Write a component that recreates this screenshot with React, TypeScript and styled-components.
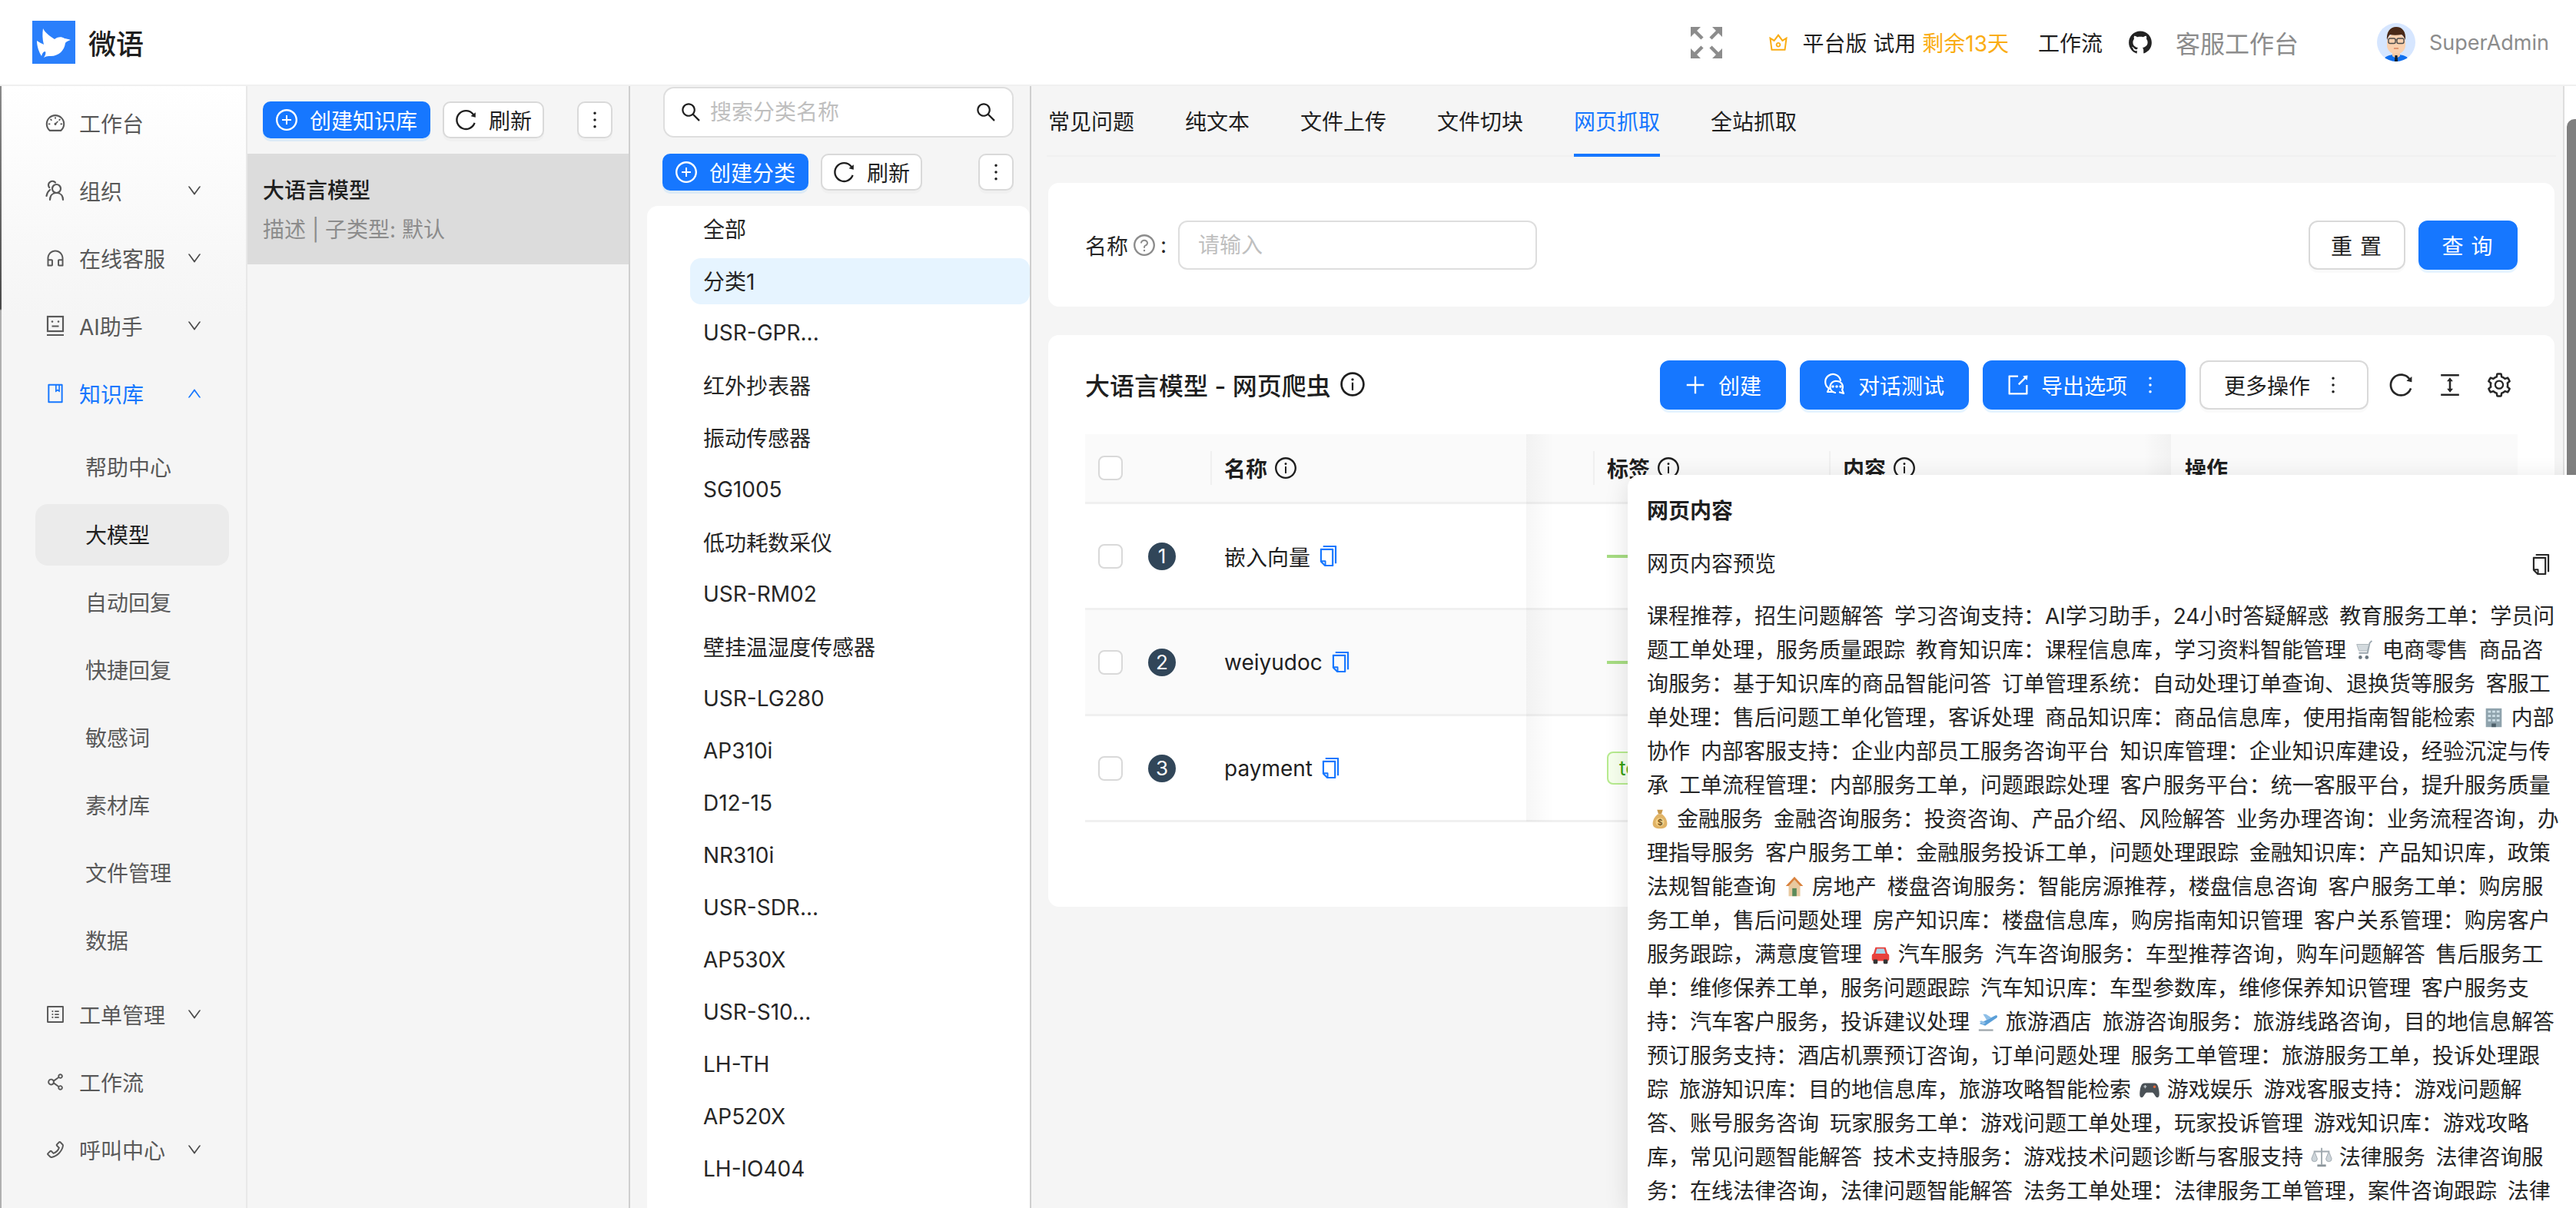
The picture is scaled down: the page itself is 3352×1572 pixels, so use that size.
import React from "react";
import styled, { createGlobalStyle } from "styled-components";
import {
  AiOutlineDashboard, AiOutlineCustomerService, AiOutlineBook, AiOutlineProfile, AiOutlineShareAlt,
  AiOutlinePhone, AiOutlineDown, AiOutlineUp, AiOutlinePlusCircle, AiOutlineReload, AiOutlineMore,
  AiOutlineSearch, AiOutlineInfoCircle, AiOutlineQuestionCircle, AiOutlinePlus, AiOutlineExport,
  AiOutlineColumnHeight, AiOutlineSetting, AiOutlineCrown, AiFillGithub, AiOutlineCopy,
} from "react-icons/ai";

const Global = createGlobalStyle`
  html, body { margin: 0; padding: 0; background: #f5f5f5; }
  * { box-sizing: border-box; }
  body { font-family: Inter, "Noto Sans CJK SC", sans-serif; font-size: 28px; color: #1f1f1f; }
`;

const Page = styled.div`width: 3352px; height: 1572px; overflow: hidden; display: flex; flex-direction: column; position: relative;`;
const Header = styled.header`height: 112px; flex: none; background: #fff; border-bottom: 2px solid #f0f0f0; display: flex; align-items: center; padding: 0 35px 0 42px;`;
const Brand = styled.div`display: flex; align-items: center; gap: 17px; font-size: 36px; font-weight: 500; color: #1f1f1f;`;
const HeaderRight = styled.div`margin-left: auto; display: flex; align-items: center;`;
const FullBtn = styled.span`display: flex; margin-right: 58px;`;
const PlanIcon = styled.span`display: flex; color: #faad14; margin-right: 16px; font-size: 30px;`;
const PlanText = styled.span`white-space: nowrap; margin-right: 38px;`;
const Warn = styled.span`color: #faad14; margin-left: 8px;`;
const HeaderLink = styled.span`white-space: nowrap; margin-right: 32px;`;
const GitIcon = styled.span`display: flex; font-size: 34px; margin-right: 29px; color: #222;`;
const Desk = styled.span`font-size: 32px; color: #8c8c8c; white-space: nowrap; margin-right: 102px;`;
const User = styled.div`display: flex; align-items: center; gap: 18px; color: #8c8c8c; font-size: 27px;`;

const Body = styled.div`flex: 1; min-height: 0; display: flex; position: relative; overflow: hidden;`;
const EdgeStrip = styled.div`width: 2px; flex: none; background: linear-gradient(#8a8a8a 0, #4a4a4a 290px, #b0b0b0 292px);`;
const Sidebar = styled.nav`width: 320px; flex: none; padding: 8px 22px 0 44px; background: linear-gradient(#ffffff, #f5f5f5 300px); border-right: 2px solid #e8e8e8; display: flex; flex-direction: column; gap: 8px;`;
const SubMenu = styled.div`display: flex; flex-direction: column; gap: 8px; margin: 8px 0;`;
const MenuRow = styled.div<{ $active?: boolean; $selected?: boolean; $sub?: boolean }>`
  height: 80px; flex: none; display: flex; align-items: center; gap: 17px; border-radius: 16px;
  padding: ${(p) => (p.$sub ? "0 0 2px 65px" : "0 34px 0 12px")};
  color: ${(p) => (p.$active ? "#1677ff" : p.$selected ? "#1f1f1f" : "#595959")};
  background: ${(p) => (p.$selected ? "#ebebeb" : "transparent")};
  white-space: nowrap;
`;
const MenuIcon = styled.span`display: flex; width: 28px; font-size: 30px; justify-content: center;`;
const Chevron = styled.span`margin-left: auto; display: flex; font-size: 22px; color: #4a4a4a; stroke: currentColor; stroke-width: 50;`;
const ChevronActive = styled(Chevron)`color: #1677ff;`;

const KbColumn = styled.section`width: 498px; flex: none; background: #f5f5f5; border-right: 2px solid #cfcfcf;`;
const BtnRow = styled.div`display: flex; align-items: center; gap: 16px;`;
const KbToolbar = styled(BtnRow)`height: 88px; padding: 0 21px 0 20px;`;
const SmallBtn = styled.button<{ $primary?: boolean }>`
  height: 48px; display: inline-flex; align-items: center; gap: 16px; border-radius: 10px;
  padding: 0 ${(p) => (p.$primary ? "15px" : "14px")};
  font: inherit; white-space: nowrap; cursor: pointer;
  background: ${(p) => (p.$primary ? "#1677ff" : "#fff")};
  color: ${(p) => (p.$primary ? "#fff" : "#1f1f1f")};
  border: 2px solid ${(p) => (p.$primary ? "#1677ff" : "#d9d9d9")};
  box-shadow: 0 4px 0 ${(p) => (p.$primary ? "rgba(5,145,255,.1)" : "rgba(0,0,0,.02)")};
`;
const MoreBtn = styled(SmallBtn)`margin-left: auto; width: 46px; padding: 0; justify-content: center;`;
const BtnIcon = styled.span`display: flex; font-size: 32px; margin: -2px;`;
const KbItem = styled.div`height: 144px; background: #dcdcdc; padding: 28px 20px; display: flex; flex-direction: column; gap: 12px;`;
const KbTitle = styled.div`font-weight: 500; line-height: 40px; color: #1f1f1f;`;
const KbDesc = styled.div`color: #8c8c8c; line-height: 38px;`;

const CatColumn = styled.section`width: 522px; flex: none; background: #f5f5f5; border-right: 2px solid #cfcfcf; padding-top: 1px; overflow: hidden;`;
const SearchBox = styled.div`margin: 0 21px 0 43px; height: 66px; border: 2px solid #dedede; border-radius: 14px; background: #fff; display: flex; align-items: center; padding: 0 20px; gap: 11px;`;
const SearchInput = styled.input`
  flex: 1; min-width: 0; border: 0; outline: 0; font: inherit; background: transparent; padding: 0; color: #1f1f1f;
  &::placeholder { color: #bfbfbf; }
`;
const SearchIcon = styled.span`display: flex; font-size: 30px; color: #1f1f1f; margin: -1px;`;
const CatToolbar = styled(BtnRow)`margin: 21px 21px 20px 42px;`;
const CatList = styled.ul`list-style: none; margin: 0 0 0 22px; padding: 0; background: #fff; border-radius: 14px 14px 0 0; height: 1400px;`;
const CatItem = styled.li<{ $selected?: boolean }>`
  height: 60px; margin: 0 0 8px 56px; padding: 0 0 2px 17px; display: flex; align-items: center; border-radius: 14px; color: #262626;
  background: ${(p) => (p.$selected ? "#e6f4ff" : "transparent")};
`;

const Main = styled.main`flex: 1; min-width: 0; background: #f5f5f5; padding: 0 11px 0 22px;`;
const Tabs = styled.div`height: 92px; margin: 0 -2px; border-bottom: 2px solid #f0f0f0; display: flex; gap: 66px; padding-left: 2px;`;
const Tab = styled.div<{ $active?: boolean }>`
  height: 92px; line-height: 94px; white-space: nowrap; position: relative;
  color: ${(p) => (p.$active ? "#1677ff" : "#1f1f1f")};
  border-bottom: 4px solid ${(p) => (p.$active ? "#1677ff" : "transparent")};
`;
const Card = styled.div`background: #fff; border-radius: 14px;`;
const FilterCard = styled(Card)`height: 161px; margin-top: 34px; padding: 0 48px; display: flex; align-items: center;`;
const Label = styled.label`display: flex; align-items: center; gap: 5px; white-space: nowrap; margin-right: 15px; color: #262626;`;
const HelpIcon = styled.span`display: flex; color: #8c8c8c; font-size: 32px;`;
const FilterInput = styled.input`
  width: 467px; height: 64px; border: 2px solid #dedede; border-radius: 12px; padding: 0 24px; font: inherit; outline: 0; background: #fff;
  &::placeholder { color: #bfbfbf; }
`;
const FilterActions = styled.div`margin-left: auto; display: flex; gap: 17px;`;
const BigBtn = styled.button<{ $primary?: boolean }>`
  height: 64px; display: inline-flex; align-items: center; gap: 16px; padding: 0 30px; border-radius: 12px; font: inherit; white-space: nowrap; cursor: pointer;
  background: ${(p) => (p.$primary ? "#1677ff" : "#fff")};
  color: ${(p) => (p.$primary ? "#fff" : "#1f1f1f")};
  border: 2px solid ${(p) => (p.$primary ? "#1677ff" : "#d9d9d9")};
  box-shadow: 0 4px 0 ${(p) => (p.$primary ? "rgba(5,145,255,.1)" : "rgba(0,0,0,.02)")};
`;
const SpacedBtn = styled(BigBtn)`letter-spacing: 10px; padding: 0 24px 0 32px; width: ${(p) => (p.$primary ? "129px" : "126px")}; justify-content: center;`;
const TableCard = styled(Card)`height: 744px; margin-top: 37px; padding: 33px 48px;`;
const TableHead = styled.div`height: 64px; display: flex; align-items: center; margin-bottom: 32px;`;
const TableTitle = styled.h2`margin: 0 0 2px; font-size: 32px; font-weight: 500; display: flex; align-items: center; gap: 10px; color: #1f1f1f;`;
const TitleIcon = styled.span`display: flex; font-size: 36px;`;
const TableActions = styled.div`margin-left: auto; display: flex; align-items: center; gap: 18px;`;
const ToolIcons = styled.div`display: flex; align-items: center; gap: 28px; font-size: 36px; margin-left: 6px; margin-right: 6px; color: #262626;`;
const ToolIcon = styled.span`display: flex;`;
const Table = styled.div`position: relative;`;
const Row = styled.div<{ $head?: boolean; $striped?: boolean }>`
  display: grid; grid-template-columns: 163px 411px 87px 307px 445px 451px;
  height: ${(p) => (p.$head ? "91px" : "138px")};
  background: ${(p) => (p.$head || p.$striped ? "#fafafa" : "#fff")};
  border-bottom: 3px solid #f0f0f0;
  font-weight: ${(p) => (p.$head ? 600 : 400)};
`;
const Cell = styled.div<{ $divider?: boolean }>`
  display: flex; align-items: center; padding-left: 18px; position: relative; gap: 8px; white-space: nowrap; overflow: hidden;
  ${(p) => p.$divider && `&::before { content: ""; position: absolute; left: 0; top: 22px; height: 44px; width: 2px; background: #f0f0f0; }`}
`;
const CheckCell = styled(Cell)`gap: 33px; padding-left: 17px;`;
const Check = styled.span`width: 32px; height: 32px; border: 2px solid #d9d9d9; border-radius: 8px; background: #fff; flex: none;`;
const Rank = styled.span`width: 36px; height: 36px; border-radius: 50%; background: #314659; color: #fff; font-size: 26px; display: flex; align-items: center; justify-content: center; flex: none;`;
const CopyBlue = styled.span`display: flex; color: #1677ff; font-size: 31px;`;
const HeadIcon = styled.span`display: flex; font-size: 32px; font-weight: 400;`;
const ActionHead = styled(Cell)`background: #fafafa;`;
const LeftFade = styled.div`position: absolute; left: 574px; top: 0; width: 36px; height: 504px; background: linear-gradient(to right, rgba(5,5,5,.035), transparent); pointer-events: none;`;
const RightFade = styled.div`position: absolute; left: 1377px; top: 0; width: 36px; height: 91px; background: linear-gradient(to left, rgba(5,5,5,.035), transparent); pointer-events: none;`;
const GreenBar = styled.span`width: 60px; height: 4px; background: #a6dc82; flex: none;`;
const GreenTag = styled.span`height: 43px; padding: 0 14px; display: inline-flex; align-items: center; border: 2px solid #b7eb8f; background: #f6ffed; color: #389e0d; border-radius: 8px; font-size: 26px;`;

const ScrollTrack = styled.div`width: 17px; flex: none; background: #fff; border-left: 2px solid #dedede; padding: 43px 0 0 3px;`;
const ScrollThumb = styled.div`width: 12px; height: 600px; background: #808080; border-radius: 10px 0 0 10px;`;

const Popup = styled.aside`
  position: absolute; left: 2118px; top: 506px; right: 0; bottom: 0; background: #fff; border-radius: 16px 0 0 0;
  box-shadow: 0 6px 32px rgba(0,0,0,.12); padding: 25px 18px 0 25px; overflow: hidden;
`;
const PopupTitle = styled.div`font-weight: 600; line-height: 44px;`;
const PreviewRow = styled.div`display: flex; align-items: center; justify-content: space-between; line-height: 44px; margin-top: 25px; padding-right: 12px; color: #262626;`;
const PopupCopy = styled.span`display: flex; font-size: 31px; color: #262626;`;
const Content = styled.div`margin-top: 24px; color: #262626;`;
const Line = styled.div`height: 44px; line-height: 44px; white-space: nowrap; word-spacing: 6px;`;
const EmojiBox = styled.svg<{ $lead?: boolean }>`
  width: 30px; height: 30px; vertical-align: -5px;
  margin: ${(p) => (p.$lead ? "0 -7px 0 2px" : "0 -6px 0 -5px")};
`;

const Logo = () => (
  <svg width="56" height="56" viewBox="0 0 56 56">
    <rect width="56" height="56" fill="#2a7ffb" />
    <path d="M14 10c3 6 9 10 15 14 3-3 9-4 13-1 2 0 5 1 8 2-3 1-6 2-7 4-1 9-8 17-19 17-3 0-6 0-9 2 2-3 3-6 2-8-3 0-4 3-5 6-3-5-6-12-6-20 3 2 7 4 9 5-2-7-2-14-1-21z" fill="#fff" />
  </svg>
);
const Expand = () => (
  <svg width="41" height="41" viewBox="0 0 41 41" fill="#8c8c8c" stroke="#8c8c8c">
    <path d="M0 0h13L0 13zM41 0H28l13 13zM0 41h13L0 28zM41 41H28l13-13z" strokeWidth="0" />
    <path d="M6 6l9 9M35 6l-9 9M6 35l9-9M35 35l-9-9" strokeWidth="4.5" fill="none" />
  </svg>
);
const Avatar = () => (
  <svg width="50" height="50" viewBox="0 0 50 50">
    <defs><clipPath id="av"><circle cx="25" cy="25" r="25" /></clipPath></defs>
    <g clipPath="url(#av)">
      <rect width="50" height="50" fill="#d6e6ff" />
      <path d="M8 50c1-7 8-9 17-9s16 2 17 9z" fill="#0f6ff0" />
      <path d="M20 35h10v8l-5 3-5-3z" fill="#f6c8a4" />
      <rect x="13" y="14" width="24" height="26" rx="11" fill="#f9d0ae" />
      <path d="M13 22c-1-10 4-17 12-17s13 6 12 17c-2-4-3-6-5-7-6 1-11 1-15 0-2 2-3 4-4 7z" fill="#4a2a18" />
      <rect x="15" y="20" width="9" height="6.5" rx="2" fill="none" stroke="#4a4a4a" strokeWidth="1.4" />
      <rect x="26" y="20" width="9" height="6.5" rx="2" fill="none" stroke="#4a4a4a" strokeWidth="1.4" />
      <path d="M24 22h2" stroke="#4a4a4a" strokeWidth="1.2" />
      <path d="M22 33h6" stroke="#d8845e" strokeWidth="1.4" />
      <path d="M23.5 42h3l.7 8h-4.4z" fill="#12202e" />
    </g>
  </svg>
);
const Team = () => (
  <svg width="28" height="28" viewBox="0 0 28 28" fill="none" stroke="currentColor" strokeWidth="2.2" strokeLinecap="round">
    <circle cx="15.5" cy="11.5" r="5.5" />
    <path d="M7 26c0-5.5 3.5-9 8.5-9s8.5 3.5 8.5 9" />
    <path d="M14 3.5A5 5 0 0 0 7 3c-2.5 1.5-2.5 5-.8 7M7 13c-2.5 2-4 5-4.5 8" />
  </svg>
);
const Bot = () => (
  <svg width="28" height="28" viewBox="0 0 28 28" fill="none" stroke="currentColor" strokeWidth="2.2">
    <rect x="4" y="2" width="20" height="19" />
    <circle cx="10" cy="8.5" r="1.3" fill="currentColor" stroke="none" />
    <circle cx="18" cy="8.5" r="1.3" fill="currentColor" stroke="none" />
    <path d="M9.5 14.5h9M3 26h22" />
  </svg>
);
const Chat = () => (
  <svg width="32" height="32" viewBox="-2 -2 32 32" fill="none" stroke="currentColor" strokeWidth="2.2" strokeLinecap="round" strokeLinejoin="round">
    <path d="M11 23H4l2-4.500A10 10 0 1 1 21 8" />
    <path d="M14 24a7.500 7.500 0 0 1 2-15 7.500 7.500 0 0 1 7 11l2 5-5-1.500" />
    <circle cx="11" cy="16" r=".7" fill="currentColor" /><circle cx="16" cy="16" r=".7" fill="currentColor" /><circle cx="21" cy="16" r=".7" fill="currentColor" />
  </svg>
);

const emojiArt: Record<string, React.ReactNode> = {
  "🛒": <><path d="M26 3l-3 3-3 14H8" fill="none" stroke="#9aa5ad" strokeWidth="2" /><path d="M5 8h17l-2.5 9H8z" fill="#d3dade" stroke="#aab3b9" /><circle cx="10" cy="26" r="2.5" fill="#6b7780" /><circle cx="19" cy="26" r="2.5" fill="#6b7780" /></>,
  "🏢": <><rect x="5" y="3" width="22" height="26" fill="#8fa3ad" /><path d="M8 6h4v3H8zM14 6h4v3h-4zM20 6h4v3h-4zM8 12h4v3H8zM14 12h4v3h-4zM20 12h4v3h-4zM8 18h4v3H8zM14 18h4v3h-4zM20 18h4v3h-4z" fill="#cfe0e8" /><rect x="13" y="24" width="6" height="5" fill="#4d5f69" /></>,
  "💰": <><path d="M12 3h8l-2 6h-4z" fill="#c99a4d" /><path d="M13 9h6c5 4 7 9 7 13 0 5-4 7-10 7S6 27 6 22c0-4 2-9 7-13z" fill="#e0b366" /><circle cx="16" cy="20" r="6" fill="#f3d189" /><text x="16" y="24" textAnchor="middle" fontSize="11" fontWeight="700" fill="#7a5a1e">$</text></>,
  "🏡": <><path d="M16 2L4 15h4v14h16V15h4z" fill="#e8c9a0" /><path d="M16 2L4 15h4l8-9 8 9h4z" fill="#d9823f" /><rect x="13" y="18" width="6" height="11" fill="#5b8a5a" /></>,
  "🚗": <><path d="M9 6h14l3 10H6z" fill="#e8413c" /><path d="M11 8h10l2 7H9z" fill="#a8d6ea" /><rect x="4" y="15" width="24" height="10" rx="3" fill="#e8413c" /><rect x="6" y="23" width="6" height="6" rx="1.5" fill="#333" /><rect x="20" y="23" width="6" height="6" rx="1.5" fill="#333" /></>,
  "🛫": <><path d="M4 18l22-11c2-1 4 1 2 3L12 21z" fill="#5a9fd8" /><path d="M14 13L9 5l4 0 8 5zM9 20l-5-5 3-1 6 3z" fill="#8fc0e8" /><rect x="3" y="26" width="20" height="2.5" fill="#a0a8ad" /></>,
  "🎮": <><path d="M9 7h14c3 0 5 3 6 9s1 11-2 11c-3 0-4-6-7-7h-8c-3 1-4 7-7 7s-3-5-2-11 3-9 6-9z" fill="#4b5257" /><circle cx="23" cy="12" r="1.8" fill="#e86a3a" /><path d="M8 11h4v1.5H8zM9.3 9.5h1.5V14H9.3z" fill="#bcc3c7" /></>,
  "⚖️": <><path d="M16 3v23M5 8h22" stroke="#9fa8ae" strokeWidth="2" fill="none" /><path d="M2 18l4-10 4 10a4 4 0 0 1-8 0zM22 18l4-10 4 10a4 4 0 0 1-8 0z" fill="#ccd4d9" stroke="#9fa8ae" /><rect x="10" y="26" width="12" height="3" fill="#8a949a" /></>,
};
const Emoji = ({ name, lead }: { name: string; lead?: boolean }) => <EmojiBox viewBox="0 0 32 32" $lead={lead}>{emojiArt[name]}</EmojiBox>;

const lines = [
  "课程推荐，招生问题解答 学习咨询支持：AI学习助手，24小时答疑解惑 教育服务工单：学员问",
  "题工单处理，服务质量跟踪 教育知识库：课程信息库，学习资料智能管理 🛒 电商零售 商品咨",
  "询服务：基于知识库的商品智能问答 订单管理系统：自动处理订单查询、退换货等服务 客服工",
  "单处理：售后问题工单化管理，客诉处理 商品知识库：商品信息库，使用指南智能检索 🏢 内部",
  "协作 内部客服支持：企业内部员工服务咨询平台 知识库管理：企业知识库建设，经验沉淀与传",
  "承 工单流程管理：内部服务工单，问题跟踪处理 客户服务平台：统一客服平台，提升服务质量",
  "💰 金融服务 金融咨询服务：投资咨询、产品介绍、风险解答 业务办理咨询：业务流程咨询，办",
  "理指导服务 客户服务工单：金融服务投诉工单，问题处理跟踪 金融知识库：产品知识库，政策",
  "法规智能查询 🏡 房地产 楼盘咨询服务：智能房源推荐，楼盘信息咨询 客户服务工单：购房服",
  "务工单，售后问题处理 房产知识库：楼盘信息库，购房指南知识管理 客户关系管理：购房客户",
  "服务跟踪，满意度管理 🚗 汽车服务 汽车咨询服务：车型推荐咨询，购车问题解答 售后服务工",
  "单：维修保养工单，服务问题跟踪 汽车知识库：车型参数库，维修保养知识管理 客户服务支",
  "持：汽车客户服务，投诉建议处理 🛫 旅游酒店 旅游咨询服务：旅游线路咨询，目的地信息解答",
  "预订服务支持：酒店机票预订咨询，订单问题处理 服务工单管理：旅游服务工单，投诉处理跟",
  "踪 旅游知识库：目的地信息库，旅游攻略智能检索 🎮 游戏娱乐 游戏客服支持：游戏问题解",
  "答、账号服务咨询 玩家服务工单：游戏问题工单处理，玩家投诉管理 游戏知识库：游戏攻略",
  "库，常见问题智能解答 技术支持服务：游戏技术问题诊断与客服支持 ⚖️ 法律服务 法律咨询服",
  "务：在线法律咨询，法律问题智能解答 法务工单处理：法律服务工单管理，案件咨询跟踪 法律",
];
const emojiSplit = /(🛒|🏢|💰|🏡|🚗|🛫|🎮|⚖️)/u;

const topMenu = [
  { label: "工作台", icon: <AiOutlineDashboard /> },
  { label: "组织", icon: <Team />, more: true },
  { label: "在线客服", icon: <AiOutlineCustomerService />, more: true },
  { label: "AI助手", icon: <Bot />, more: true },
];
const subMenu = ["帮助中心", "大模型", "自动回复", "快捷回复", "敏感词", "素材库", "文件管理", "数据"];
const lowMenu = [
  { label: "工单管理", icon: <AiOutlineProfile />, more: true },
  { label: "工作流", icon: <AiOutlineShareAlt /> },
  { label: "呼叫中心", icon: <AiOutlinePhone />, more: true },
];
const categories = ["全部", "分类1", "USR-GPR...", "红外抄表器", "振动传感器", "SG1005", "低功耗数采仪", "USR-RM02", "壁挂温湿度传感器", "USR-LG280", "AP310i", "D12-15", "NR310i", "USR-SDR...", "AP530X", "USR-S10...", "LH-TH", "AP520X", "LH-IO404"];
const tabs = ["常见问题", "纯文本", "文件上传", "文件切块", "网页抓取", "全站抓取"];
const rows = [
  { name: "嵌入向量", tag: null },
  { name: "weiyudoc", tag: null },
  { name: "payment", tag: "test" },
];

const MenuEntry = ({ label, icon, more }: { label: string; icon: React.ReactNode; more?: boolean }) => (
  <MenuRow>
    <MenuIcon>{icon}</MenuIcon>
    {label}
    {more && <Chevron><AiOutlineDown /></Chevron>}
  </MenuRow>
);

export default function App() {
  return (
    <Page>
      <Global />
      <Header>
        <Brand><Logo />微语</Brand>
        <HeaderRight>
          <FullBtn><Expand /></FullBtn>
          <PlanIcon><AiOutlineCrown /></PlanIcon>
          <PlanText>平台版 试用<Warn>剩余13天</Warn></PlanText>
          <HeaderLink>工作流</HeaderLink>
          <GitIcon><AiFillGithub /></GitIcon>
          <Desk>客服工作台</Desk>
          <User><Avatar />SuperAdmin</User>
        </HeaderRight>
      </Header>
      <Body>
        <EdgeStrip />
        <Sidebar>
          {topMenu.map((m) => <MenuEntry key={m.label} {...m} />)}
          <MenuRow $active>
            <MenuIcon><AiOutlineBook /></MenuIcon>知识库
            <ChevronActive><AiOutlineUp /></ChevronActive>
          </MenuRow>
          <SubMenu>
            {subMenu.map((s) => <MenuRow key={s} $sub $selected={s === "大模型"}>{s}</MenuRow>)}
          </SubMenu>
          {lowMenu.map((m) => <MenuEntry key={m.label} {...m} />)}
        </Sidebar>
        <KbColumn>
          <KbToolbar>
            <SmallBtn $primary><BtnIcon><AiOutlinePlusCircle /></BtnIcon>创建知识库</SmallBtn>
            <SmallBtn><BtnIcon><AiOutlineReload /></BtnIcon>刷新</SmallBtn>
            <MoreBtn><BtnIcon><AiOutlineMore /></BtnIcon></MoreBtn>
          </KbToolbar>
          <KbItem>
            <KbTitle>大语言模型</KbTitle>
            <KbDesc>描述 | 子类型: 默认</KbDesc>
          </KbItem>
        </KbColumn>
        <CatColumn>
          <SearchBox>
            <SearchIcon><AiOutlineSearch /></SearchIcon>
            <SearchInput placeholder="搜索分类名称" />
            <SearchIcon><AiOutlineSearch /></SearchIcon>
          </SearchBox>
          <CatToolbar>
            <SmallBtn $primary><BtnIcon><AiOutlinePlusCircle /></BtnIcon>创建分类</SmallBtn>
            <SmallBtn><BtnIcon><AiOutlineReload /></BtnIcon>刷新</SmallBtn>
            <MoreBtn><BtnIcon><AiOutlineMore /></BtnIcon></MoreBtn>
          </CatToolbar>
          <CatList>
            {categories.map((c) => <CatItem key={c} $selected={c === "分类1"}>{c}</CatItem>)}
          </CatList>
        </CatColumn>
        <Main>
          <Tabs>
            {tabs.map((t) => <Tab key={t} $active={t === "网页抓取"}>{t}</Tab>)}
          </Tabs>
          <FilterCard>
            <Label>名称<HelpIcon><AiOutlineQuestionCircle /></HelpIcon>:</Label>
            <FilterInput placeholder="请输入" />
            <FilterActions>
              <SpacedBtn>重置</SpacedBtn>
              <SpacedBtn $primary>查询</SpacedBtn>
            </FilterActions>
          </FilterCard>
          <TableCard>
            <TableHead>
              <TableTitle>大语言模型 - 网页爬虫<TitleIcon><AiOutlineInfoCircle /></TitleIcon></TableTitle>
              <TableActions>
                <BigBtn $primary><BtnIcon><AiOutlinePlus /></BtnIcon>创建</BigBtn>
                <BigBtn $primary><BtnIcon><Chat /></BtnIcon>对话测试</BigBtn>
                <BigBtn $primary><BtnIcon><AiOutlineExport /></BtnIcon>导出选项<BtnIcon><AiOutlineMore /></BtnIcon></BigBtn>
                <BigBtn>更多操作<BtnIcon><AiOutlineMore /></BtnIcon></BigBtn>
                <ToolIcons>
                  <ToolIcon><AiOutlineReload /></ToolIcon>
                  <ToolIcon><AiOutlineColumnHeight /></ToolIcon>
                  <ToolIcon><AiOutlineSetting /></ToolIcon>
                </ToolIcons>
              </TableActions>
            </TableHead>
            <Table>
              <Row $head>
                <CheckCell><Check /></CheckCell>
                <Cell $divider>名称<HeadIcon><AiOutlineInfoCircle /></HeadIcon></Cell>
                <Cell />
                <Cell $divider>标签<HeadIcon><AiOutlineInfoCircle /></HeadIcon></Cell>
                <Cell $divider>内容<HeadIcon><AiOutlineInfoCircle /></HeadIcon></Cell>
                <ActionHead>操作</ActionHead>
              </Row>
              {rows.map((r, i) => (
                <Row key={r.name} $striped={i === 1}>
                  <CheckCell><Check /><Rank>{i + 1}</Rank></CheckCell>
                  <Cell>{r.name}<CopyBlue><AiOutlineCopy /></CopyBlue></Cell>
                  <Cell />
                  <Cell>{r.tag ? <GreenTag>{r.tag}</GreenTag> : <GreenBar />}</Cell>
                  <Cell />
                  <Cell />
                </Row>
              ))}
              <LeftFade />
              <RightFade />
            </Table>
          </TableCard>
        </Main>
        <ScrollTrack><ScrollThumb /></ScrollTrack>
        <Popup>
          <PopupTitle>网页内容</PopupTitle>
          <PreviewRow>网页内容预览<PopupCopy><AiOutlineCopy /></PopupCopy></PreviewRow>
          <Content>
            {lines.map((l) => (
              <Line key={l}>
                {l.split(emojiSplit).map((part, i, all) =>
                  i % 2 ? <Emoji key={i} name={part} lead={i === 1 && all[0] === ""} /> : part
                )}
              </Line>
            ))}
          </Content>
        </Popup>
      </Body>
    </Page>
  );
}
